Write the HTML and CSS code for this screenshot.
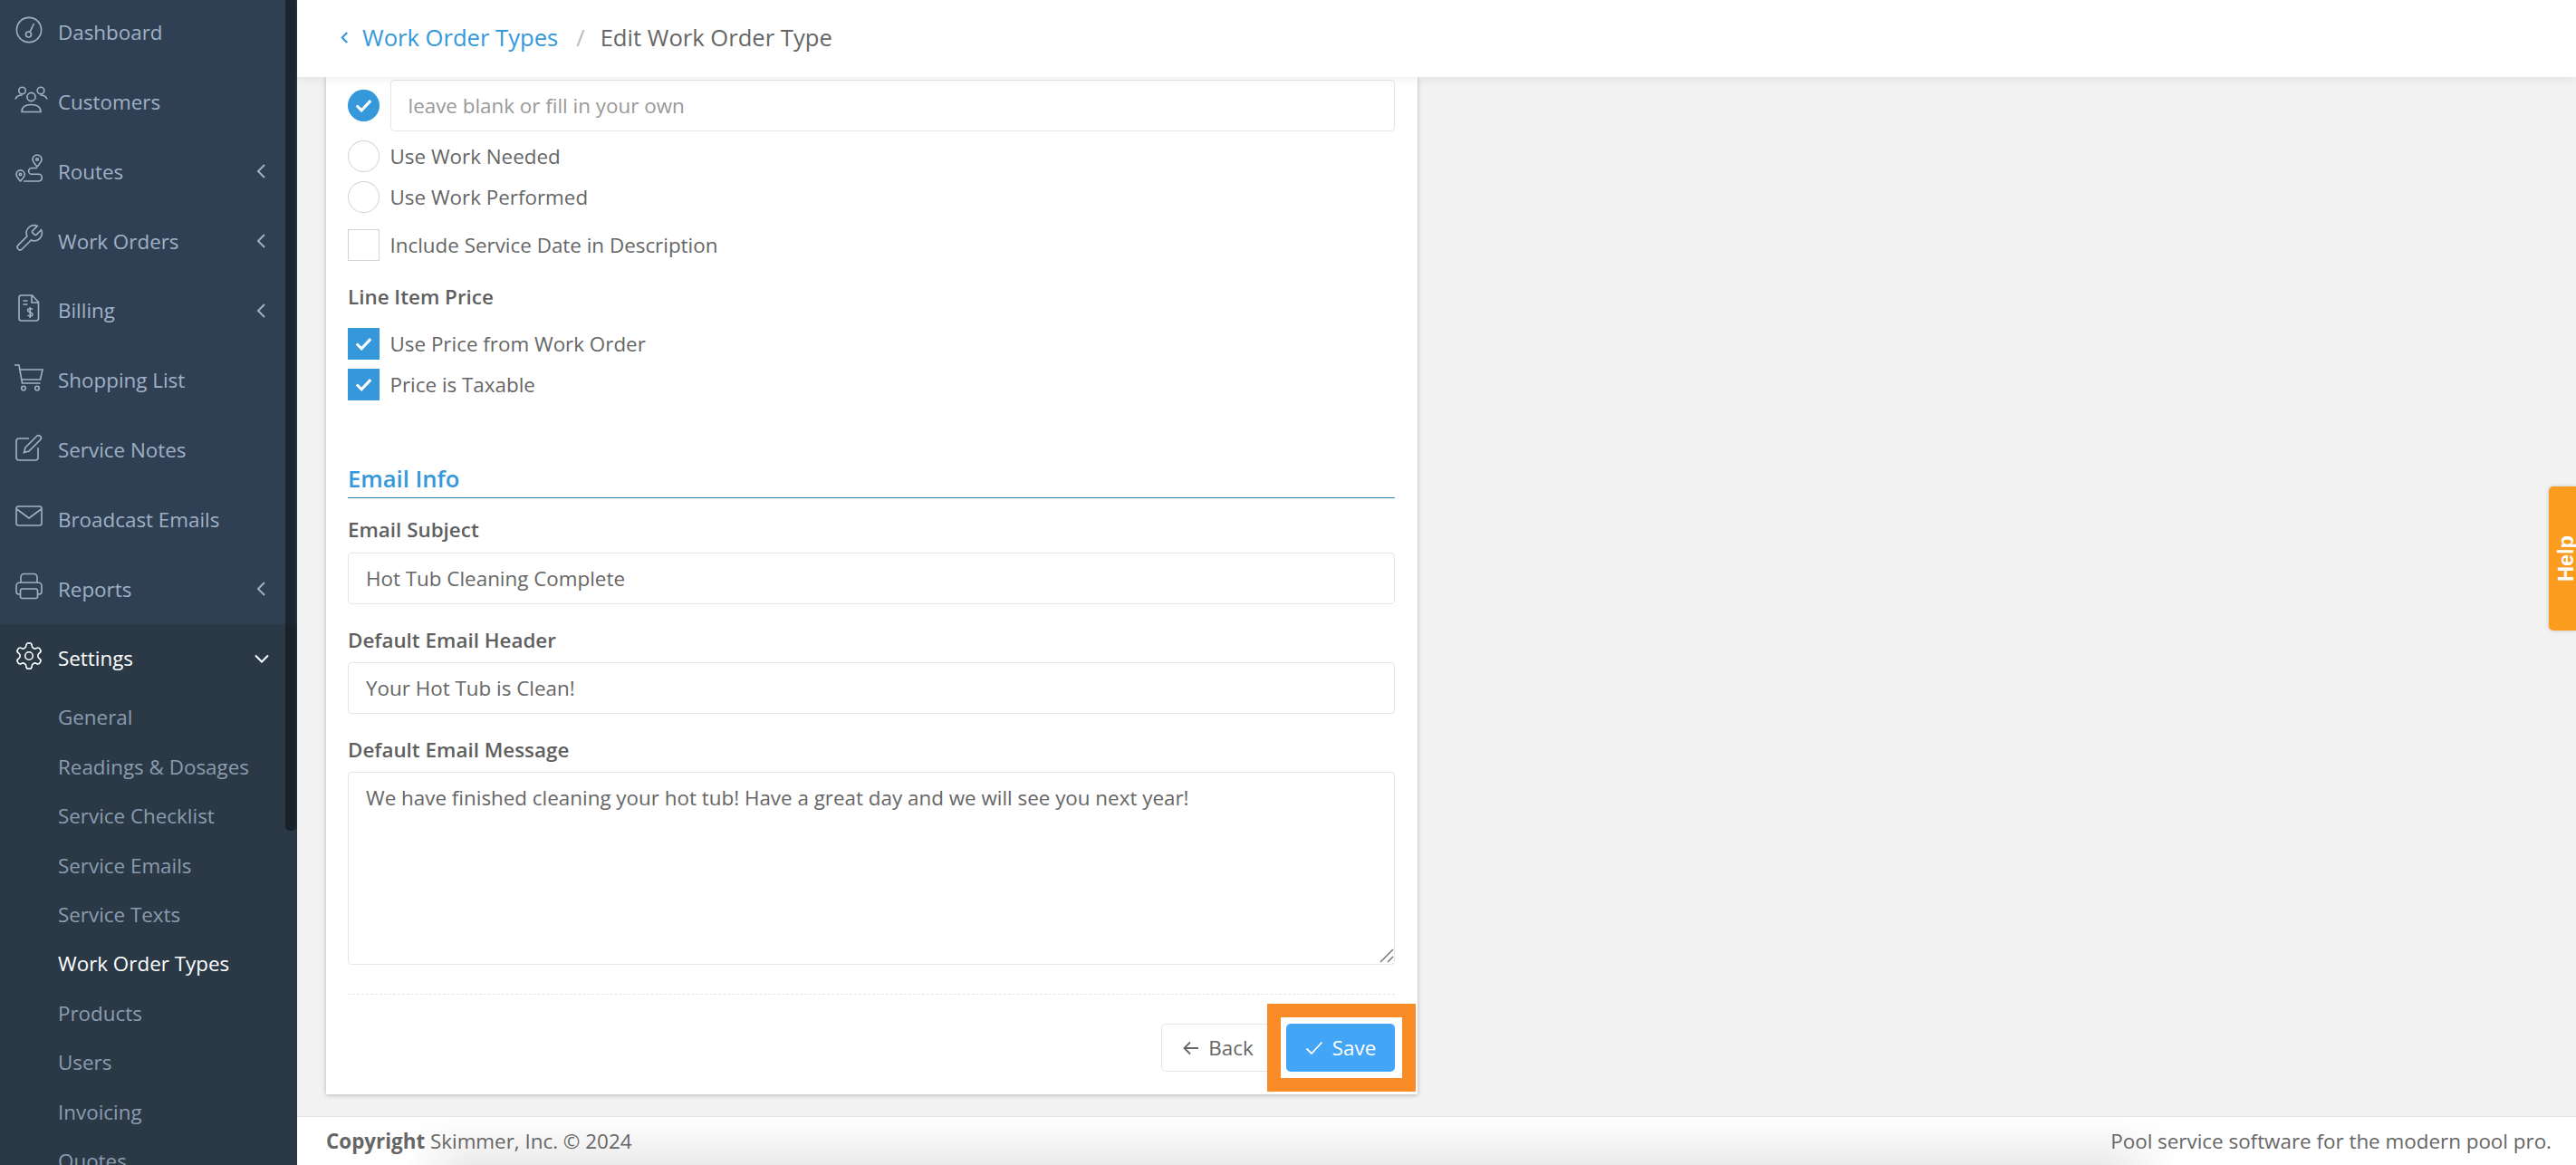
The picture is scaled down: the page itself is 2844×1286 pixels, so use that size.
FILE: index.html
```html
<!DOCTYPE html>
<html lang="en">
<head>
<meta charset="utf-8">
<title>Edit Work Order Type</title>
<link rel="stylesheet" href="styles.css">
</head>
<body>
<div class="app">
  <aside class="sidebar">
    <div class="thumb"></div>
    <nav class="nav">
      <a class="item"><svg class="ico" viewBox="0 0 30 30"><circle cx="15" cy="15" r="13.6"/><circle cx="14.500" cy="20" r="3"/><path d="M16 17.400 20.500 8M15 5.500v.1M8 9v.1M23 10.500v.1M6 14.500v.1"/></svg><span class="lbl">Dashboard</span></a>
      <a class="item"><svg class="ico wide" viewBox="0 0 36 30"><circle cx="8.500" cy="5" r="3.800"/><circle cx="29" cy="5" r="3.800"/><circle cx="18.500" cy="12" r="4.600"/><path d="M1 14.500c1-3 4-4.500 7.500-4.500M36 14.500c-1-3-4-4.500-7.500-4.500M8 28.500c0-4 2.500-8 10.500-8S29 24.500 29 28.500z"/></svg><span class="lbl">Customers</span></a>
      <a class="item"><svg class="ico" viewBox="0 0 30 30"><path d="M24 13c-3-3.500-5-5.500-5-8a5 5 0 0 1 10 0c0 2.500-2 4.500-5 8z"/><circle cx="24" cy="5" r="1.300"/><path d="M5.500 29c-2.500-3-4.500-5-4.500-7.500a4.600 4.600 0 0 1 9.200 0c0 2.500-2 4.500-4.700 7.500z"/><circle cx="5.500" cy="21.500" r="1.200"/><path d="M24 14.500h-6a3.300 3.300 0 0 0 0 6.800h7.500a3.800 3.800 0 0 1 0 7.700H9"/></svg><span class="lbl">Routes</span><svg class="chev" viewBox="0 0 10 16"><path d="M9 1 2 8l7 7"/></svg></a>
      <a class="item"><svg class="ico" viewBox="1.500 1.500 21 21"><path d="M14.700 6.300a1 1 0 0 0 0 1.400l1.600 1.600a1 1 0 0 0 1.400 0l3.770-3.770a6 6 0 0 1-7.940 7.940l-6.910 6.910a2.120 2.120 0 0 1-3-3l6.910-6.910a6 6 0 0 1 7.940-7.940l-3.760 3.760z"/></svg><span class="lbl">Work Orders</span><svg class="chev" viewBox="0 0 10 16"><path d="M9 1 2 8l7 7"/></svg></a>
      <a class="item"><svg class="ico" viewBox="0 0 30 30"><path d="M6.500 1h12l7 7.500v18a2.500 2.500 0 0 1-2.500 2.500H6.500A2.500 2.500 0 0 1 4 26.500v-23A2.500 2.500 0 0 1 6.500 1zM18 1v8h7.500M8.500 7h5M8.500 11h5M19 16.500c-1-1-5.500-1.500-5.500 1s5.500 2 5.500 4.500-4.500 2-5.500 1M16.200 14v12"/></svg><span class="lbl">Billing</span><svg class="chev" viewBox="0 0 10 16"><path d="M9 1 2 8l7 7"/></svg></a>
      <a class="item"><svg class="ico cart" viewBox="0 0 32 30"><path d="M0 1h5l3.500 20h20M6 6h25l-2.500 11H8"/><circle cx="10" cy="26.500" r="2.300"/><circle cx="25" cy="26.500" r="2.300"/></svg><span class="lbl">Shopping List</span></a>
      <a class="item"><svg class="ico" viewBox="0 0 30 30"><path d="M15 5H4a3 3 0 0 0-3 3v18a3 3 0 0 0 3 3h18a3 3 0 0 0 3-3V15"/><path d="M11 15 23.500 2.500a2.800 2.800 0 0 1 4 4L15 19l-5.500 1.500z"/></svg><span class="lbl">Service Notes</span></a>
      <a class="item"><svg class="ico" viewBox="0 0 30 30"><rect x="1" y="4" width="28" height="21" rx="2.500"/><path d="M1.500 7 15 17 28.500 7"/></svg><span class="lbl">Broadcast Emails</span></a>
      <a class="item"><svg class="ico" viewBox="0 0 30 30"><path d="M6 11V5a3.500 3.500 0 0 1 3.500-3.500h11A3.500 3.500 0 0 1 24 5v6"/><path d="M5.500 24H4a3 3 0 0 1-3-3v-6a4 4 0 0 1 4-4h20a4 4 0 0 1 4 4v6a3 3 0 0 1-3 3h-1.500"/><rect x="5.500" y="18" width="19" height="10.500" rx="2"/><path d="M24 14.500v.1"/></svg><span class="lbl">Reports</span><svg class="chev" viewBox="0 0 10 16"><path d="M9 1 2 8l7 7"/></svg></a>
      <div class="group">
        <a class="item open"><svg class="ico" viewBox="1.500 1.500 21 21"><path d="M12.220 2h-.44a2 2 0 0 0-2 2v.18a2 2 0 0 1-1 1.730l-.43.25a2 2 0 0 1-2 0l-.15-.08a2 2 0 0 0-2.730.73l-.22.38a2 2 0 0 0 .73 2.730l.15.1a2 2 0 0 1 1 1.720v.51a2 2 0 0 1-1 1.740l-.15.09a2 2 0 0 0-.73 2.730l.22.38a2 2 0 0 0 2.730.73l.15-.08a2 2 0 0 1 2 0l.43.25a2 2 0 0 1 1 1.730V20a2 2 0 0 0 2 2h.44a2 2 0 0 0 2-2v-.18a2 2 0 0 1 1-1.730l.43-.25a2 2 0 0 1 2 0l.15.08a2 2 0 0 0 2.730-.73l.22-.39a2 2 0 0 0-.73-2.730l-.15-.08a2 2 0 0 1-1-1.740v-.5a2 2 0 0 1 1-1.740l.15-.09a2 2 0 0 0 .73-2.730l-.22-.38a2 2 0 0 0-2.730-.73l-.15.08a2 2 0 0 1-2 0l-.43-.25a2 2 0 0 1-1-1.730V4a2 2 0 0 0-2-2z"/><circle cx="12" cy="12" r="3"/></svg><span class="lbl">Settings</span><svg class="chev down" viewBox="0 0 16 10"><path d="M1 1.500 8 8.500l7-7"/></svg></a>
        <a class="sub">General</a>
        <a class="sub">Readings &amp; Dosages</a>
        <a class="sub">Service Checklist</a>
        <a class="sub">Service Emails</a>
        <a class="sub">Service Texts</a>
        <a class="sub active">Work Order Types</a>
        <a class="sub">Products</a>
        <a class="sub">Users</a>
        <a class="sub">Invoicing</a>
        <a class="sub">Quotes</a>
      </div>
    </nav>
  </aside>
  <main class="main">
    <header class="topbar">
      <svg class="back-chev" viewBox="0 0 8 12"><path d="M6.500 1 1.500 6l5 5"/></svg>
      <a class="crumb-link">Work Order Types</a>
      <span class="crumb-sep">/</span>
      <span class="crumb-cur">Edit Work Order Type</span>
    </header>
    <div class="content">
      <section class="card">
        <div class="choice">
          <span class="radio on"><svg class="tick" viewBox="0 0 16 12"><path d="M1.500 6 6 10.500 14.500 1.500"/></svg></span>
          <input class="field" placeholder="leave blank or fill in your own">
        </div>
        <div class="choice r1"><span class="radio"></span><span class="opt">Use Work Needed</span></div>
        <div class="choice r2"><span class="radio"></span><span class="opt">Use Work Performed</span></div>
        <div class="choice r3"><span class="box"></span><span class="opt">Include Service Date in Description</span></div>
        <div class="label l1">Line Item Price</div>
        <div class="choice r4"><span class="box on"><svg class="tick" viewBox="0 0 16 12"><path d="M1.500 6 6 10.500 14.500 1.500"/></svg></span><span class="opt">Use Price from Work Order</span></div>
        <div class="choice r5"><span class="box on"><svg class="tick" viewBox="0 0 16 12"><path d="M1.500 6 6 10.500 14.500 1.500"/></svg></span><span class="opt">Price is Taxable</span></div>
        <h2 class="section">Email Info</h2>
        <div class="label l2">Email Subject</div>
        <input class="field full" value="Hot Tub Cleaning Complete">
        <div class="label l3">Default Email Header</div>
        <input class="field full" value="Your Hot Tub is Clean!">
        <div class="label l3">Default Email Message</div>
        <div class="area-wrap">
          <textarea class="area">We have finished cleaning your hot tub! Have a great day and we will see you next year!</textarea>
          <svg class="grip" viewBox="0 0 16 16"><path d="M15 1 1 15M15 9l-6 6"/></svg>
        </div>
        <div class="actions">
          <button class="btn back"><svg class="btn-ico" viewBox="0 0 18 16"><path d="M17 8H1.500M8 1.500 1.500 8 8 14.500"/></svg>Back</button>
          <button class="btn save"><svg class="btn-ico wide-ico" viewBox="0 0 20 16"><path d="M1.500 8.500 7 14 18.500 1.500"/></svg>Save</button>
        </div>
        <div class="callout"></div>
      </section>
    </div>
    <footer class="footer">
      <span><b>Copyright</b> Skimmer, Inc. © 2024</span>
      <span>Pool service software for the modern pool pro.</span>
    </footer>
  </main>
  <div class="help">Help</div>
</div>
</body>
</html>
```
FILE: styles.css
```css
* { box-sizing: border-box; }
html, body { margin: 0; height: 100%; overflow: hidden; }
body { font-family: "Open Sans", sans-serif; color: #666; background: #f2f2f2; }
.app { display: flex; height: 1286px; position: relative; }
.sidebar { width: 328px; flex: none; background: #304054; position: relative; overflow: hidden; }
.thumb { position: absolute; z-index: 2; left: 315px; top: -10px; width: 11px; height: 927px; background: rgba(0,0,0,.42); border-radius: 0 0 5px 5px; box-shadow: 2px 0 0 rgba(0,0,0,.22); }
.nav { margin-top: -2.600px; }
.item { display: flex; align-items: center; height: 76.800px; padding-left: 17px; color: #9fb1c4; font-size: 22.400px; position: relative; }
.ico { width: 30px; height: 30px; flex: none; fill: none; stroke: #9fb1c4; stroke-width: 1.600; overflow: visible; margin: 0 17px 6px 0; }
.ico * { vector-effect: non-scaling-stroke; }
.ico.wide { width: 36px; margin-left: -1px; margin-right: 12px; }
.ico.cart { width: 32px; margin-left: -1px; margin-right: 16px; }
.chev { position: absolute; left: 283px; top: 30px; width: 10px; height: 16px; fill: none; stroke: #9fb1c4; stroke-width: 2; }
.group { background: #2b3947; }
.item.open { color: #fff; }
.item.open .ico { stroke: #fff; }
.chev.down { left: 281px; top: 33px; width: 16px; height: 10px; stroke: #fff; }
.sub { display: block; height: 54.400px; line-height: 54.400px; padding-left: 64px; color: #8a9cad; font-size: 22.400px; }
.sub.active { color: #fff; }
.main { flex: 1; min-width: 0; display: flex; flex-direction: column; }
.topbar { height: 85px; flex: none; background: #fff; display: flex; align-items: center; padding: 0 0 3px 48px; font-size: 25.600px; box-shadow: 0 2px 10px rgba(0,0,0,.08); position: relative; z-index: 1; }
.back-chev { width: 9px; height: 13px; fill: none; stroke: #3498db; stroke-width: 2; margin-right: 15px; }
.crumb-link { color: #3498db; }
.crumb-sep { color: #bbb; margin: 0 17px 0 20px; }
.crumb-cur { color: #666; }
.content { flex: 1; min-height: 0; overflow: hidden; padding-left: 32px; }
.card { width: 1205px; height: 1123px; background: #fff; box-shadow: 0 1px 5px rgba(0,0,0,.25); padding: 3px 25px 0 24px; position: relative; font-size: 22.400px; }
.choice { display: flex; align-items: center; gap: 12px; }
.r1 { margin-top: 10px; height: 35px; }
.r2 { margin-top: 10px; height: 35px; }
.r3 { margin-top: 18px; height: 34px; }
.r4 { height: 35px; }
.r5 { margin-top: 9px; height: 36px; }
.radio, .box { width: 34.500px; height: 35px; flex: none; border: 1px solid #d3d3d3; background: #fff; display: flex; align-items: center; justify-content: center; }
.radio { border-radius: 50%; }
.on { background: #3498db; border-color: #3498db; }
.tick { width: 19px; height: 15px; fill: none; stroke: #fff; stroke-width: 2.600; }
.opt { color: #666; }
.field { display: block; flex: 1; min-width: 0; height: 57px; border: 1px solid #e6e6e6; border-radius: 4px; padding: 0 19px; font: 22.400px "Open Sans", sans-serif; color: #666; background: #fff; outline: none; }
.field::placeholder { color: #999; opacity: 1; }
.full { width: 100%; }
.label { font-weight: 600; color: #5f5f5f; font-size: 22.400px; line-height: 30px; }
.l1 { margin-top: 26px; margin-bottom: 19px; }
.section { margin: 70px 0 0; font-size: 25.600px; font-weight: 600; color: #3498db; height: 38px; line-height: 34px; border-bottom: 1px solid #2f7fb5; }
.l2 { margin-top: 20px; margin-bottom: 10px; }
.l3 { margin-top: 25px; margin-bottom: 9px; }
.area-wrap { position: relative; }
.area { display: block; width: 100%; height: 213px; border: 1px solid #e6e6e6; border-radius: 4px; padding: 13px 19px; font: 22.400px/30px "Open Sans", sans-serif; color: #666; resize: none; outline: none; }
.grip { position: absolute; right: 1px; bottom: 2px; width: 16px; height: 16px; fill: none; stroke: #777; stroke-width: 1.500; }
.actions { margin-top: 32px; border-top: 1px dashed #e6e6e6; padding-top: 32px; display: flex; justify-content: flex-end; gap: 12px; }
.btn { height: 53px; border-radius: 5px; font: 22.400px "Open Sans", sans-serif; display: flex; align-items: center; justify-content: center; gap: 10px; padding: 0; }
.btn-ico { width: 18px; height: 16px; fill: none; stroke: currentColor; stroke-width: 1.800; }
.btn-ico.wide-ico { width: 20px; }
.back { width: 126px; border: 1px solid #e6e6e6; background: #fff; color: #666; }
.save { width: 120px; border: 0; background: #42a5f5; color: #fff; }
.callout { position: absolute; left: 1039px; top: 1023px; width: 164px; height: 97px; border: 15px solid #fa8c28; }
.footer { height: 54px; flex: none; border-top: 1px solid #e4e4e4; background: linear-gradient(to right, #fff 120px, rgba(255,255,255,0) 190px), linear-gradient(to left, #fff 440px, rgba(255,255,255,0) 520px), linear-gradient(#fff, #ebebeb); display: flex; justify-content: space-between; align-items: center; padding: 0 27px 0 32px; font-size: 22.400px; color: #666; }
.footer b { font-weight: 700; }
.help { position: absolute; right: 0; top: 537px; width: 30px; height: 159px; padding-right: 9px; background: #fb9c1e; color: #fff; font: 700 23.500px/21px "Liberation Sans", sans-serif; writing-mode: vertical-rl; transform: rotate(180deg); border-radius: 0 5px 5px 0; text-align: center; box-shadow: 0 0 4px rgba(0,0,0,.2); }
```
